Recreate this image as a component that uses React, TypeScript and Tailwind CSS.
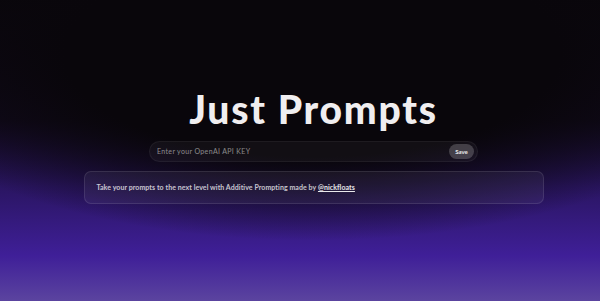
export default function App() {
  return (
    <main className="flex min-h-[301px] w-full flex-col items-center bg-[radial-gradient(ellipse_75%_62%_at_52%_18%,#09060b_55%,rgba(9,6,11,0)_100%),linear-gradient(to_bottom,#0a070c_0%,#120a1f_40%,#2a1562_62%,#3f1f98_85%,#5b449f_100%)] pl-[27px] font-['Lato',sans-serif]">
      <h1 className="mt-[90px] text-[39px] font-black leading-none tracking-[0.045em] text-[#f0eef0]">
        Just Prompts
      </h1>
      <div className="mt-[12px] flex h-[21px] w-[329px] items-center rounded-full border border-white/5 bg-white/[0.04] pr-[3px] pl-[7px]">
        <input
          className="min-w-0 flex-1 bg-transparent text-[7px] tracking-[0.05em] text-white/70 outline-none placeholder:text-white/50"
          placeholder="Enter your OpenAI API KEY"
        />
        <button className="flex h-[15px] w-[25px] items-center justify-center rounded-full bg-white/20 text-[6px] font-bold text-white/90">
          Save
        </button>
      </div>
      <div className="mt-[9px] flex h-[33px] w-[460px] items-center rounded-[7px] border border-white/10 bg-white/[0.05] px-[12px]">
        <p className="text-[7px] font-bold tracking-[0.01em] text-white/75">
          Take your prompts to the next level with Additive Prompting made by{" "}
          <a className="text-white/90 underline">@nickfloats</a>
        </p>
      </div>
    </main>
  );
}
